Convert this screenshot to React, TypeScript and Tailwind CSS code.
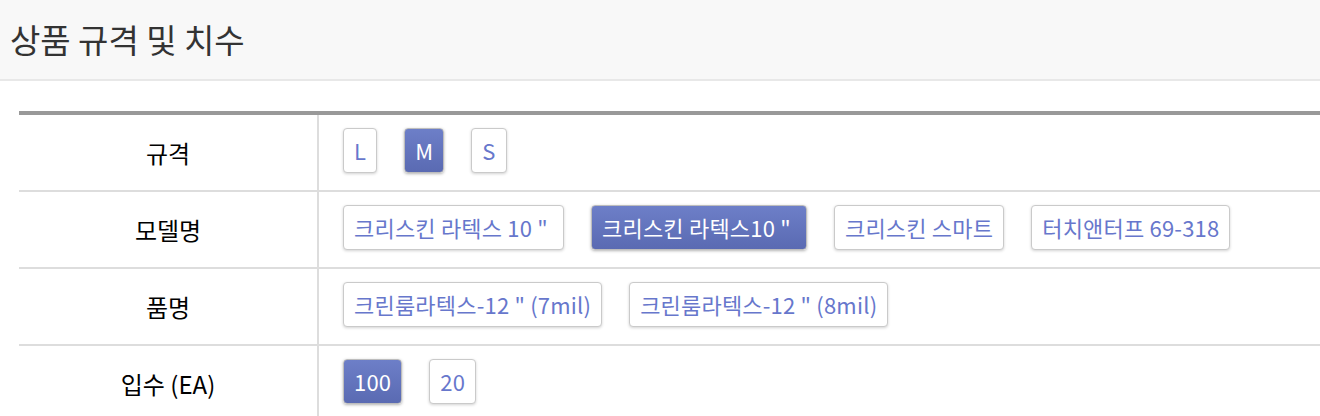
import React from "react";

const font = { fontFamily: '"Noto Sans CJK KR", "Noto Sans", sans-serif' };

type Opt = { label: string; selected?: boolean };

const rows: { title: string; opts: Opt[] }[] = [
  { title: "규격", opts: [{ label: "L" }, { label: "M", selected: true }, { label: "S" }] },
  {
    title: "모델명",
    opts: [
      { label: '크리스킨 라텍스 10 "\u00a0' },
      { label: '크리스킨 라텍스10 "\u00a0', selected: true },
      { label: "크리스킨 스마트" },
      { label: "터치앤터프 69-318" },
    ],
  },
  {
    title: "품명",
    opts: [{ label: '크린룸라텍스-12 " (7mil)' }, { label: '크린룸라텍스-12 " (8mil)' }],
  },
  { title: "입수 (EA)", opts: [{ label: "100", selected: true }, { label: "20" }] },
];

function Btn({ label, selected }: Opt) {
  return (
    <div
      className={
        selected
          ? "h-[45px] px-[10px] flex items-center rounded-[4px] border border-[#bdbdbd] bg-gradient-to-b from-[#6d7fc8] to-[#5a6ab2] text-white text-[22px] tracking-[0.2px] shadow-[0_1px_3px_rgba(0,0,0,0.3)] whitespace-pre"
          : "h-[45px] px-[10px] flex items-center rounded-[4px] border-[1.5px] border-[#cacaca] bg-white text-[#6777cc] text-[22px] tracking-[0.2px] shadow-[0_1px_3px_rgba(0,0,0,0.18)] whitespace-pre"
      }
    >
      {label}
    </div>
  );
}

export default function App() {
  return (
    <div className="w-[1320px] h-[416px] overflow-hidden bg-white" style={font}>
      <div className="h-[81px] bg-[#f8f8f8] border-b-2 border-[#e8e8e8] flex items-center pl-[10px] pb-[1px]">
        <h1 className="text-[33px] text-[#333] leading-none">상품 규격 및 치수</h1>
      </div>
      <div className="mt-[30px] ml-[19px] w-[1320px] border-t-[4px] border-[#999]">
        {rows.map((r) => (
          <div key={r.title} className="grid grid-cols-[300px_1fr] border-b-2 border-[#ddd]">
            <div className="border-r-2 border-[#ddd] flex items-center justify-center text-[24px] text-black">
              {r.title}
            </div>
            <div className="pl-[24px] pt-[13px] pb-[17px] flex gap-[27px]">
              {r.opts.map((o) => (
                <Btn key={o.label} {...o} />
              ))}
            </div>
          </div>
        ))}
      </div>
    </div>
  );
}
